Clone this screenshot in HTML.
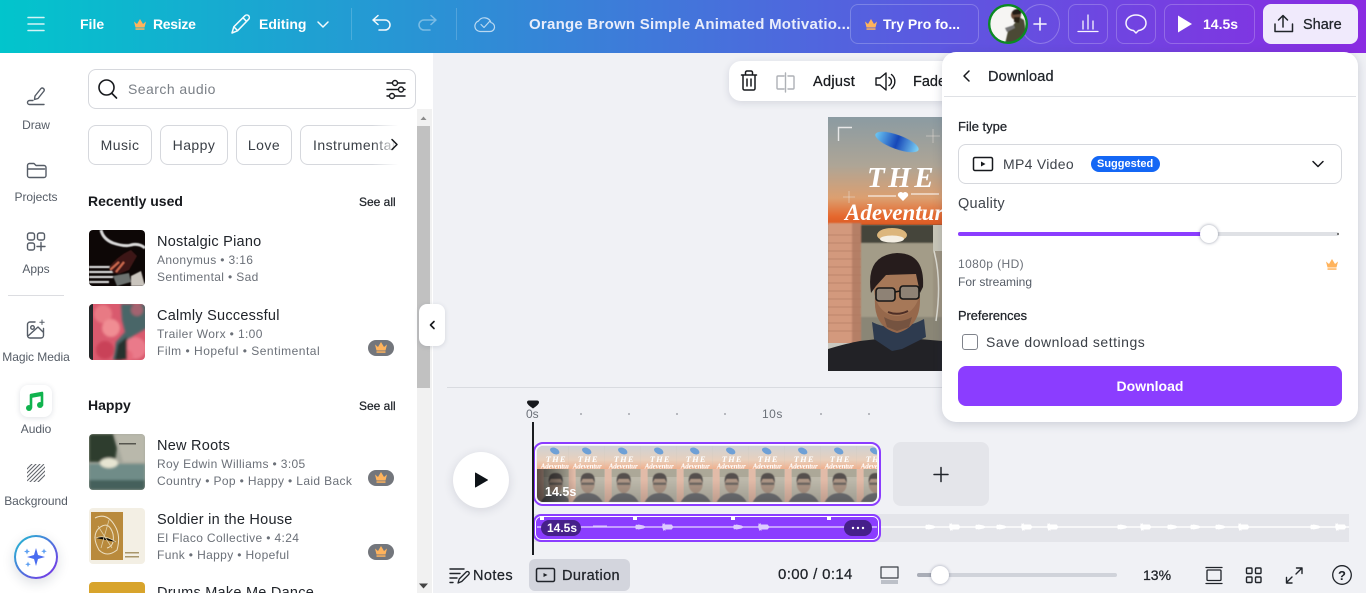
<!DOCTYPE html>
<html><head><meta charset="utf-8"><style>
*{box-sizing:border-box}html,body{margin:0;padding:0;width:1366px;height:593px;overflow:hidden}
body{background:#f0f1f5;font-family:"Liberation Sans",sans-serif;color:#0e1318}
#p{position:relative;width:1366px;height:593px;overflow:hidden;background:#f0f1f5}
.a{position:absolute}
.t{position:absolute;white-space:nowrap;line-height:18px;height:18px}
.m{-webkit-text-stroke:.25px currentColor}
.w{color:#fff}
.nav{font-size:12px;color:#555c66;width:72px;text-align:center;left:0;letter-spacing:-.05px}
.ti{font-size:14.5px;color:#20242a;left:157px;letter-spacing:.25px}
.su{font-size:12px;color:#6b7078;left:157px;letter-spacing:.36px}
.chip{position:absolute;top:125px;height:40px;border:1px solid #d6d8dd;border-radius:8px;background:#fff;font-size:14px;line-height:38px;text-align:center;color:#3a3f46;letter-spacing:.45px;white-space:nowrap}
.btn{position:absolute;top:4px;height:40px;border:1px solid rgba(255,255,255,.22);border-radius:8px}
.pill{position:absolute;left:368px;width:26px;height:16px;border-radius:8px;background:#73767c}
svg.i{position:absolute;left:0;top:0;overflow:visible}
</style></head><body><div id="p">
<div class="a" style="left:0;top:0;width:1366px;height:53px;background:linear-gradient(90deg,#02c5cc 0%,#2c90d5 33%,#5a5ae0 67%,#8a2be2 100%)"></div>
<div class="a" style="left:351px;top:8px;width:1px;height:32px;background:rgba(255,255,255,.18)"></div>
<div class="a" style="left:456px;top:8px;width:1px;height:32px;background:rgba(255,255,255,.18)"></div>
<div class="a" style="left:0;top:53px;width:433px;height:540px;background:#fff"></div>
<div class="a" style="left:417px;top:109px;width:15px;height:484px;background:#f1f1f1"></div>
<div class="a" style="left:417px;top:126px;width:13px;height:262px;background:#c1c1c1"></div>
<div class="a" style="left:447px;top:387px;width:500px;height:1px;background:#d9dbe0"></div>

<!-- header buttons -->
<div class="btn" style="left:850px;width:129px"></div>
<div class="a" style="left:1021px;top:4px;width:39px;height:40px;border:1px solid rgba(255,255,255,.25);border-radius:50%"></div>
<div class="btn" style="left:1068px;width:40px"></div>
<div class="btn" style="left:1116px;width:40px"></div>
<div class="btn" style="left:1164px;width:91px"></div>
<div class="a" style="left:1263px;top:4px;width:95px;height:40px;background:#f0eafc;border-radius:8px"></div>

<div class="t w" style="left:80px;top:15px;font-size:14px;font-weight:bold">File</div>
<div class="t w" style="left:153px;top:15px;font-size:14px;font-weight:bold;letter-spacing:-.3px">Resize</div>
<div class="t w" style="left:259px;top:15px;font-size:14px;font-weight:bold">Editing</div>
<div class="t" style="left:529px;top:16px;font-size:15px;font-weight:bold;color:#e9edfb;letter-spacing:.25px">Orange Brown Simple Animated Motivatio...</div>
<div class="t w" style="left:883px;top:15px;font-size:14px;font-weight:bold">Try Pro fo...</div>
<div class="t w" style="left:1203px;top:15px;font-size:14px;font-weight:bold">14.5s</div>
<div class="t m" style="left:1303px;top:16px;font-size:14.5px;color:#20242a">Share</div>

<!-- avatar -->
<svg class="a" style="left:988px;top:4px" width="40" height="40" viewBox="0 0 40 40">
<defs><clipPath id="av"><circle cx="20" cy="20" r="18"/></clipPath><filter id="ba"><feGaussianBlur stdDeviation=".5"/></filter></defs>
<g clip-path="url(#av)"><rect width="40" height="40" fill="#f6f5f3"/><g filter="url(#ba)">
<path d="M17 40l3-13 7-8 4-6 5 3 4 24z" fill="#4c4a36"/><circle cx="28" cy="11" r="5" fill="#6a4d3a"/><path d="M24 8q4-5 10-2l-1 4-8 1z" fill="#241c18"/><path d="M26 13l6 0-1 6-5-1z" fill="#2a2018"/><path d="M17 24l9-3 1 3-8 4z" fill="#777"/></g></g>
<circle cx="20" cy="20" r="18.8" fill="none" stroke="#0b8a22" stroke-width="2.4"/></svg>

<!-- search -->
<div class="a" style="left:88px;top:69px;width:328px;height:40px;border:1px solid #d6d8dd;border-radius:8px"></div>
<div class="t" style="left:128px;top:80px;font-size:14px;color:#7b8087;letter-spacing:.45px">Search audio</div>
<div class="chip" style="left:88px;width:64px">Music</div>
<div class="chip" style="left:160px;width:68px">Happy</div>
<div class="chip" style="left:236px;width:56px">Love</div>
<div class="chip" style="left:300px;width:110px;text-align:left;padding-left:12px;overflow:hidden">Instrumental</div>
<div class="a" style="left:372px;top:124px;width:44px;height:42px;background:linear-gradient(90deg,rgba(255,255,255,0),#fff 60%)"></div>

<!-- nav labels -->
<div class="t nav" style="top:116px">Draw</div>
<div class="t nav" style="top:188px">Projects</div>
<div class="t nav" style="top:260px">Apps</div>
<div class="a" style="left:8px;top:295px;width:56px;height:1px;background:#dcdde1"></div>
<div class="t nav" style="top:348px">Magic Media</div>
<div class="a" style="left:20px;top:385px;width:32px;height:32px;background:#fff;border-radius:8px;box-shadow:0 1px 6px rgba(30,40,70,.14)"></div>
<div class="t nav" style="top:420px">Audio</div>
<div class="t nav" style="top:492px">Background</div>
<div class="a" style="left:14px;top:535px;width:44px;height:44px;border-radius:50%;background:linear-gradient(135deg,#1fc0d0,#7d2ae8);box-shadow:0 4px 12px rgba(30,40,70,.15)"></div>
<div class="a" style="left:16px;top:537px;width:40px;height:40px;border-radius:50%;background:#fff"></div>

<!-- list -->
<div class="t" style="left:88px;top:192px;font-size:14px;font-weight:bold;color:#17191d">Recently used</div>
<div class="t m" style="left:359px;top:193px;font-size:12px;color:#20242a">See all</div>
<div class="t" style="left:88px;top:396px;font-size:14px;font-weight:bold;color:#17191d">Happy</div>
<div class="t m" style="left:359px;top:397px;font-size:12px;color:#20242a">See all</div>

<svg class="a" style="left:89px;top:230px" width="56" height="56" viewBox="0 0 56 56"><defs><clipPath id="r1"><rect width="56" height="56" rx="4"/></clipPath><filter id="b1"><feGaussianBlur stdDeviation=".6"/></filter></defs><g clip-path="url(#r1)"><rect width="56" height="56" fill="#0d0706"/><g filter="url(#b1)"><path d="M12 0q2 9 12 13 12 4 18 2 8-2 14 3" fill="none" stroke="#d9d9d9" stroke-width="3"/><path d="M0 36h24v2H0zM0 41h25v2H0zM0 46h24v2H0zM0 51h20v2H0z" fill="#e6e6e6"/><path d="M20 37q10-12 22-17l6 6-8 14-10 4-6-1z" fill="#3c1512"/><path d="M21 40l9-8M27 42l8-10" stroke="#d06a50" stroke-width="2"/><path d="M24 46l16-3 2 9-14 4z" fill="#6d7270"/><path d="M42 46l10-5 4 15H42z" fill="#c9c4bd"/></g></g></svg>
<svg class="a" style="left:89px;top:304px" width="56" height="56" viewBox="0 0 56 56"><defs><clipPath id="r2"><rect width="56" height="56" rx="4"/></clipPath><filter id="b2"><feGaussianBlur stdDeviation="1.4"/></filter></defs><g clip-path="url(#r2)"><rect width="56" height="56" fill="#d95a6e"/><g filter="url(#b2)"><path d="M32 0h26v24l-14 8-8 24H24l3-18 9-10-3-12z" fill="#4a6668"/><circle cx="14" cy="10" r="9" fill="#e87a84"/><circle cx="22" cy="24" r="9" fill="#f08d93"/><circle cx="46" cy="44" r="11" fill="#ea7a8a"/><circle cx="38" cy="52" r="6" fill="#e56a7c"/><circle cx="16" cy="46" r="9" fill="#c94259"/><circle cx="48" cy="6" r="6" fill="#a3636f"/><path d="M26 56l3-16 9-7 0 23z" fill="#26302f"/></g><rect width="4" height="56" fill="#24282a"/></g></svg>
<svg class="a" style="left:89px;top:434px" width="56" height="56" viewBox="0 0 56 56"><defs><clipPath id="r3"><rect width="56" height="56" rx="4"/></clipPath><filter id="b3"><feGaussianBlur stdDeviation="1.3"/></filter></defs><g clip-path="url(#r3)"><rect width="56" height="56" fill="#a5a79b"/><g filter="url(#b3)"><path d="M26 0H56V28H34z" fill="#b9b8ab"/><path d="M0 0h24l4 14-2 14H0z" fill="#2d3e2e"/><path d="M0 30h56v26H0z" fill="#6f8c88"/><path d="M0 46h56v10H0z" fill="#44605c"/><ellipse cx="20" cy="29" rx="9" ry="5" fill="#e6e5d2"/></g><rect x="30" y="9" width="17" height="1.500" fill="#55554e"/></g></svg>
<svg class="a" style="left:89px;top:508px" width="56" height="56" viewBox="0 0 56 56"><defs><clipPath id="r4"><rect width="56" height="56" rx="4"/></clipPath></defs><g clip-path="url(#r4)"><rect width="56" height="56" fill="#f3efe4"/><rect x="2" y="4" width="32" height="48" fill="#b98a3c"/><path d="M6 10q12-6 20 8 6 10 2 24-10 8-18 0-8-14 0-22 10-8 14 6 2 12-6 14" fill="none" stroke="#ecdfc2" stroke-width="1"/><path d="M9 18l14 22M20 12l-8 28M7 30q8-4 20 4" stroke="#e0cfa6" stroke-width=".8"/><rect x="36" y="44" width="14" height="1.500" fill="#a8966a"/><rect x="36" y="48" width="14" height="1.500" fill="#a8966a"/></g></svg>
<svg class="a" style="left:89px;top:582px" width="56" height="11"><path d="M4 0h48a4 4 0 0 1 4 4v7H0V4a4 4 0 0 1 4-4z" fill="#d8a42c"/></svg>

<div class="t ti" style="top:233px">Nostalgic Piano</div>
<div class="t su" style="top:251px">Anonymus • 3:16</div>
<div class="t su" style="top:268px">Sentimental • Sad</div>
<div class="t ti" style="top:307px">Calmly Successful</div>
<div class="t su" style="top:325px">Trailer Worx • 1:00</div>
<div class="t su" style="top:342px;letter-spacing:.5px">Film • Hopeful • Sentimental</div>
<div class="t ti" style="top:437px">New Roots</div>
<div class="t su" style="top:455px">Roy Edwin Williams • 3:05</div>
<div class="t su" style="top:472px">Country • Pop • Happy • Laid Back</div>
<div class="t ti" style="top:511px">Soldier in the House</div>
<div class="t su" style="top:529px">El Flaco Collective • 4:24</div>
<div class="t su" style="top:546px">Funk • Happy • Hopeful</div>
<div class="t ti" style="top:584px">Drums Make Me Dance</div>
<div class="pill" style="top:340px"></div><div class="pill" style="top:470px"></div><div class="pill" style="top:544px"></div>

<!-- toolbar -->
<div class="a" style="left:729px;top:61px;width:230px;height:40px;background:#fff;border-radius:12px;box-shadow:0 2px 8px rgba(50,60,90,.14)"></div>
<div class="t m" style="left:813px;top:73px;font-size:14.500px;color:#17191d;letter-spacing:.3px">Adjust</div>
<div class="t m" style="left:913px;top:73px;font-size:14.500px;color:#17191d">Fade</div>

<!-- canvas preview -->
<svg class="a" style="left:828px;top:117px" width="114" height="254" viewBox="0 0 114 254">
<defs><linearGradient id="sky" x1="0" y1="0" x2="0" y2="1"><stop offset="0" stop-color="#8b9ba2"/><stop offset=".45" stop-color="#aea596"/><stop offset=".75" stop-color="#dc9f70"/><stop offset=".92" stop-color="#e5682e"/><stop offset="1" stop-color="#dc5a24"/></linearGradient>
<linearGradient id="disc" x1="0" y1="0" x2="1" y2="0"><stop offset="0" stop-color="#6cc7f3"/><stop offset=".5" stop-color="#1747b8"/><stop offset="1" stop-color="#7fd5f7"/></linearGradient>
<filter id="bp"><feGaussianBlur stdDeviation=".9"/></filter><filter id="bq"><feGaussianBlur stdDeviation=".3"/></filter></defs>
<rect width="114" height="108" fill="url(#sky)"/>
<path d="M10.500 24V10.500H24" fill="none" stroke="#e8e8e8" stroke-width="1.400"/>
<ellipse cx="69" cy="25" rx="23" ry="7" transform="rotate(20 69 25)" fill="url(#disc)" filter="url(#bq)"/>
<path d="M105 12v14M98 19h14M21 74v12M15 80h12" stroke="#e9dfd8" stroke-width=".5"/>
<g filter="url(#bq)"><text x="39" y="70" font-family="Liberation Serif" font-style="italic" font-weight="bold" font-size="29" fill="#fff" letter-spacing="3.500">THE</text>
<path d="M75 84l-5-5a3 3 0 0 1 5-3 3 3 0 0 1 5 3z" fill="#fff"/><path d="M40 79h28M83 77h28" stroke="#fff" stroke-width="1"/>
<text x="17" y="103" font-family="Liberation Serif" font-style="italic" font-weight="bold" font-size="23" fill="#fff">Adeventure</text></g>
<rect y="108" width="114" height="146" fill="#9d9481"/>
<g filter="url(#bp)">
<path d="M33 108h81v18H33z" fill="#45453a"/>
<path d="M33 126h72v74H33z" fill="#a39c88"/>
<path d="M0 106h33v122H0z" fill="#d3997d"/>
<rect x="24" y="106" width="9" height="122" fill="#a8735c" opacity=".7"/>
<path d="M33 200h81v30H33z" fill="#8a8676"/>
</g>
<path d="M0 118h33M0 126h33M0 134h33M0 142h33M0 150h33M0 158h33M0 166h33M0 174h33M0 182h33M0 190h33M0 198h33M0 206h33M0 214h33" stroke="#b07a60" stroke-width=".8" opacity=".8"/>
<g filter="url(#bq)">
<path d="M49 116q15-10 30 0z" fill="#2a2a26"/><ellipse cx="64" cy="118" rx="15" ry="7" fill="#dcb67c"/><ellipse cx="64" cy="122" rx="12" ry="3.500" fill="#f4efe3"/>
<path d="M105 108h9v26h-9z" fill="#c8c6b8"/><path d="M106 134q8 30 2 70" fill="none" stroke="#dcdad0" stroke-width="1.500"/>
<path d="M0 226h114v28H0z" fill="#c9c8c0"/>
<path d="M0 232q20-6 32-8l36-4 46 4v30H0z" fill="#232326"/>
<path d="M44 205q24 12 52-3l2 18-24 12-10 2-18-12z" fill="#2d3a50"/>
<path d="M47 180q-2 30 22 36 24-6 23-36z" fill="#96684c"/>
<ellipse cx="69" cy="172" rx="23" ry="27" fill="#a67858"/>
<path d="M43 176q-6-38 26-40 28 0 26 34l-3 6-4-19-30 1-10 11z" fill="#261f1d"/>
<rect x="48" y="171" width="19" height="13" rx="3" fill="#8e8274" stroke="#151515" stroke-width="1.600"/>
<rect x="72" y="169" width="19" height="13" rx="3" fill="#8e8274" stroke="#151515" stroke-width="1.600"/>
<path d="M67 175l5-1" stroke="#151515" stroke-width="1.600"/>
<path d="M60 195q10 4 20-1" stroke="#4e2e26" stroke-width="2" fill="none"/>
<path d="M56 200q14 8 28 0l-3 10-12 4-10-4z" fill="#5f4638" opacity=".6"/>
</g>
</svg>

<!-- ruler -->
<div class="t" style="left:526px;top:405px;font-size:12px;color:#6b7078">0s</div>
<div class="t" style="left:762px;top:405px;font-size:12px;color:#6b7078;letter-spacing:.5px">10s</div>

<!-- play -->
<div class="a" style="left:453px;top:452px;width:56px;height:56px;border-radius:50%;background:#fff;box-shadow:0 2px 10px rgba(40,50,80,.14)"></div>

<!-- film strip -->
<svg class="a" style="left:533px;top:442px" width="348" height="64" viewBox="0 0 348 64">
<defs>
<linearGradient id="g1" x1="0" y1="0" x2="0" y2="1"><stop offset="0" stop-color="#cfd2d4"/><stop offset=".6" stop-color="#e8d0bd"/><stop offset="1" stop-color="#efb08e"/></linearGradient>
<linearGradient id="dk" x1="0" y1="0" x2="0" y2="1"><stop offset=".6" stop-color="#000" stop-opacity="0"/><stop offset="1" stop-color="#000" stop-opacity=".16"/></linearGradient>
<linearGradient id="dl" x1="0" y1="0" x2="1" y2="0"><stop offset="0" stop-color="#000" stop-opacity=".6"/><stop offset="1" stop-color="#000" stop-opacity="0"/></linearGradient>
<filter id="bf"><feGaussianBlur stdDeviation=".45"/></filter>
<clipPath id="fc"><rect x="4" y="4" width="340" height="56" rx="6"/></clipPath>
<g id="fr"><rect width="36" height="56" fill="#bdb9ab"/><rect width="36" height="23" fill="url(#g1)"/>
<rect y="23" width="7" height="33" fill="#e2bba8"/><rect x="7" y="23" width="29" height="8" fill="#aca898"/>
<g filter="url(#bf)"><path d="M4 56q5-9 15-9t15 9z" fill="#707174"/><ellipse cx="19" cy="38" rx="7" ry="9" fill="#ad9686"/><path d="M12 37q-1-10 7-10t7 10l-2-4H14z" fill="#55504e"/><rect x="12.500" y="36.500" width="13" height="2.500" fill="#555" opacity=".7"/></g>
<ellipse cx="18" cy="5" rx="5" ry="3" transform="rotate(25 18 5)" fill="#6ea0d6"/>
<text x="9" y="16" font-family="Liberation Serif" font-style="italic" font-weight="bold" font-size="8.500" fill="#fff" letter-spacing="1.200">THE</text>
<text x="4" y="22.500" font-family="Liberation Serif" font-style="italic" font-weight="bold" font-size="7" fill="#fff" textLength="29">Adeventur</text></g>
</defs>
<g clip-path="url(#fc)">
<use href="#fr" x="-32" y="4"/><use href="#fr" x="3.700" y="4"/><use href="#fr" x="35.700" y="4"/><use href="#fr" x="71.700" y="4"/><use href="#fr" x="107.700" y="4"/><use href="#fr" x="143.700" y="4"/><use href="#fr" x="179.700" y="4"/><use href="#fr" x="215.700" y="4"/><use href="#fr" x="251.700" y="4"/><use href="#fr" x="287.700" y="4"/><use href="#fr" x="323.700" y="4"/>
<rect x="4" y="4" width="340" height="56" fill="url(#dk)"/><rect x="4" y="27" width="38" height="33" fill="url(#dl)"/>
</g>
<rect x="2" y="2" width="344" height="60" rx="8" fill="none" stroke="#fff" stroke-width="2"/>
<rect x="1" y="1" width="346" height="62" rx="9" fill="none" stroke="#8b3dff" stroke-width="2"/>
</svg>
<div class="t w" style="left:545px;top:483px;font-size:12.5px;font-weight:bold">14.5s</div>
<div class="a" style="left:893px;top:442px;width:96px;height:64px;background:#e4e5ea;border-radius:8px"></div>

<!-- audio track -->
<div class="a" style="left:533px;top:514px;width:816px;height:28px;background:#e4e5ea"></div>
<svg class="a" style="left:533px;top:514px" width="816" height="28" viewBox="0 0 816 28">
<defs>
<path id="bp1" d="M0 13l1-2.500 1 .5 1.500-.5 5 1 2.500 1.500-2.500 1.500-5 1-1.500-.5-1 .5z"/>
<path id="bp2" d="M0 13l.8-4 .8 1 1-1 1 8-1-1-1 1z M2.600 10.500h7l2 2.500-2 2.500h-7z"/>
</defs>
<rect x="348" y="12.300" width="468" height="1.400" fill="#fff"/>
<g fill="#fff"><use href="#bp1" x="392"/><use href="#bp2" x="416"/><use href="#bp1" x="442"/><use href="#bp1" x="463"/><use href="#bp2" x="488"/><use href="#bp2" x="514"/><use href="#bp1" x="584"/><use href="#bp2" x="607"/><use href="#bp1" x="634"/><use href="#bp1" x="657"/><use href="#bp1" x="682"/><use href="#bp2" x="705"/><use href="#bp1" x="777"/><use href="#bp2" x="802"/></g>
<rect x="1" y="1" width="346" height="26" rx="7" fill="#8b3dff" stroke="#8b3dff" stroke-width="2"/>
<rect x="2.500" y="2.500" width="343" height="23" rx="6" fill="none" stroke="#fff" stroke-width="1"/>
<rect x="4" y="12.300" width="340" height="1.400" fill="#dcc9ff"/>
<g fill="#dcc9ff"><rect x="60" y="11.500" width="14" height="1.500"/><use href="#bp1" x="102"/><use href="#bp2" x="129"/><use href="#bp1" x="200"/><use href="#bp2" x="225"/></g>
<rect x="7" y="2" width="4" height="4" fill="#fff"/><rect x="100" y="2" width="4" height="4" fill="#fff"/><rect x="198" y="2" width="4" height="4" fill="#fff"/><rect x="294" y="2" width="4" height="4" fill="#fff"/>
<rect x="8" y="6" width="40" height="16" rx="8" fill="#46208a"/>
<rect x="311" y="6" width="28" height="16" rx="8" fill="#46208a"/>
<circle cx="320" cy="14" r="1.200" fill="#fff"/><circle cx="325" cy="14" r="1.200" fill="#fff"/><circle cx="330" cy="14" r="1.200" fill="#fff"/>
</svg>
<div class="t w" style="left:547px;top:519px;font-size:12px;font-weight:bold">14.5s</div>

<!-- bottom bar -->
<div class="a" style="left:529px;top:559px;width:101px;height:32px;background:#d3d5dd;border-radius:6px"></div>
<div class="t m" style="left:473px;top:567px;font-size:14.5px;color:#20242a;letter-spacing:.45px">Notes</div>
<div class="t m" style="left:562px;top:567px;font-size:14.5px;color:#20242a;letter-spacing:.4px">Duration</div>
<div class="t m" style="left:778px;top:566px;font-size:15px;color:#20242a;letter-spacing:.35px">0:00 / 0:14</div>
<div class="t m" style="left:1143px;top:566px;font-size:14px;color:#20242a">13%</div>
<div class="a" style="left:917px;top:573px;width:200px;height:4px;border-radius:2px;background:#d0d3da"></div>
<div class="a" style="left:917px;top:573px;width:22px;height:4px;border-radius:2px;background:#a9adb7"></div>
<div class="a" style="left:931px;top:566px;width:18px;height:18px;border-radius:50%;background:#fff;box-shadow:0 0 3px rgba(40,50,80,.4)"></div>

<!-- playhead -->
<div class="a" style="left:532px;top:422px;width:2px;height:133px;background:#1a1c20"></div>

<!-- download panel -->
<div class="a" style="left:942px;top:52px;width:416px;height:370px;background:#fff;border-radius:14px;box-shadow:0 2px 10px rgba(50,60,90,.2)"></div>
<div class="a" style="left:944px;top:96px;width:412px;height:1px;background:#dfe1e5"></div>
<div class="t m" style="left:988px;top:68px;font-size:14.5px;color:#20242a;letter-spacing:.15px">Download</div>
<div class="t m" style="left:958px;top:118px;font-size:13px;color:#20242a">File type</div>
<div class="a" style="left:958px;top:144px;width:384px;height:40px;border:1px solid #d6d8dd;border-radius:8px"></div>
<div class="t" style="left:1003px;top:155px;font-size:14px;color:#3f444b;letter-spacing:.3px">MP4 Video</div>
<div class="a" style="left:1091px;top:156px;width:69px;height:16px;border-radius:8px;background:#1467f5"></div>
<div class="t w" style="left:1097px;top:155px;font-size:11px;font-weight:bold">Suggested</div>
<div class="t" style="left:958px;top:195px;font-size:14.5px;color:#3f444b;letter-spacing:.25px">Quality</div>
<div class="a" style="left:958px;top:232px;width:381px;height:4px;border-radius:2px;background:#dfe1e5"></div>
<div class="a" style="left:958px;top:232px;width:251px;height:4px;border-radius:2px;background:#8b3dff"></div>
<div class="a" style="left:1200px;top:225px;width:18px;height:18px;border-radius:50%;background:#fff;box-shadow:0 0 3px rgba(40,50,80,.5)"></div>
<div class="a" style="left:1337px;top:233px;width:2px;height:2px;background:#777"></div>
<div class="t" style="left:958px;top:255px;font-size:12px;color:#6b7078;letter-spacing:.4px">1080p (HD)</div>
<div class="t" style="left:958px;top:273px;font-size:12px;color:#555c66">For streaming</div>
<div class="t m" style="left:958px;top:307px;font-size:12.8px;color:#20242a">Preferences</div>
<div class="a" style="left:962px;top:334px;width:16px;height:16px;border:1px solid #7f838b;border-radius:3px;background:#fff"></div>
<div class="t" style="left:986px;top:333px;font-size:14px;color:#3a3f46;letter-spacing:.52px">Save download settings</div>
<div class="a" style="left:958px;top:366px;width:384px;height:40px;border-radius:8px;background:#8b3dff"></div>
<div class="t w" style="left:958px;width:384px;text-align:center;top:377px;font-size:14px;font-weight:bold">Download</div>

<!-- icons overlay -->
<svg class="i" width="1366" height="593" viewBox="0 0 1366 593" fill="none" stroke-linecap="round" stroke-linejoin="round">
<defs><g id="crown"><path d="M0 2.500l3 2.500L6 0l3 5 3-2.500L10.500 8.500h-9z"/><rect x="1.500" y="9.300" width="9" height="1.500"/></g></defs>
<g stroke="#fff" stroke-width="1.500" opacity=".95">
<path d="M28 17.500h16M28 24h16M28 30.500h16" stroke="#dff7f8"/>
<path d="M232 33l1.800-6.200L245 15.700a2.500 2.500 0 0 1 3.600 3.600L237.500 30.800zM243 17.800l3.400 3.400M234 27l3.500 3.500"/>
<path d="M318 22l5 5 5-5"/>
<path d="M373 20h12a5 5 0 0 1 0 10h-6M378 15.500L373 20l5 4.500"/>
<path d="M436 20h-12a5 5 0 0 0 0 10h6M431 15.500L436 20l-5 4.500" opacity=".4"/>
<path d="M480 31.500h10a4.500 4.500 0 0 0 1-8.900A7 7 0 0 0 478.500 21a5.400 5.400 0 0 0 1.500 10.500z M481 24.500l3 3 5.500-6" opacity=".7" stroke-width="1.200"/>
<path d="M1040 18v12M1034 24h12" stroke-width="1.600"/>
<path d="M1078 31.500h20M1083 29v-8M1088 29V15M1093 29v-8" stroke-width="1.300"/>
<path d="M1133.500 30.500C1129 30 1126 27 1126 23c0-4.600 4.500-8 10-8s10 3.400 10 8c0 4-3 7-7.500 7.500L1136 33z"/>
</g>
<path d="M1178 15.500l14 8.500-14 8.500z" fill="#fff"/>
<g fill="#ffb35c"><use href="#crown" x="134" y="19"/><use href="#crown" x="865" y="19"/><use href="#crown" x="1326" y="259"/></g>
<g fill="#ffb35c"><use href="#crown" x="375" y="342"/><use href="#crown" x="375" y="472"/><use href="#crown" x="375" y="546"/></g>
<path d="M1283 27V15.500M1278.500 20l4.500-4.500 4.500 4.500M1275 24v7.500h17.500V24" stroke="#20242a" stroke-width="1.500"/>
<!-- search + filters -->
<circle cx="106.500" cy="87.500" r="7.500" stroke="#17191d" stroke-width="1.600"/><path d="M112 93.500l4.500 4.500" stroke="#17191d" stroke-width="1.600"/>
<path d="M387 83h5M398 83h7M387 89.500h11M404 89.500h1M387 96h2M395 96h10" stroke="#17191d" stroke-width="1.400"/>
<circle cx="395" cy="83" r="2.500" stroke="#17191d" stroke-width="1.400"/><circle cx="401" cy="89.500" r="2.500" stroke="#17191d" stroke-width="1.400"/><circle cx="392" cy="96" r="2.500" stroke="#17191d" stroke-width="1.400"/>
<path d="M392 139.500l5 5-5 5" stroke="#17191d" stroke-width="1.500"/>
<path d="M420.500 120l3-3.500 3 3.500z" fill="#8a8a8a" stroke="none"/>
<path d="M419 583.500h9l-4.500 5z" fill="#444" stroke="none"/>
<!-- nav -->
<g stroke="#555c66" stroke-width="1.400">
<path d="M35 96l6-7.500a2 2 0 0 1 3 2.500l-6 7.500-3.500 1zM33 100.500h-3.500a2 2 0 0 0 0 4H44"/>
<path d="M27.500 165.500a2 2 0 0 1 2-2h4.500l2 2h8a2 2 0 0 1 2 2v8a2 2 0 0 1-2 2H29.500a2 2 0 0 1-2-2zM27.500 169h17"/>
<rect x="27.500" y="233" width="7" height="7" rx="2"/><rect x="37.500" y="233" width="7" height="7" rx="2"/><rect x="27.500" y="243" width="7" height="7" rx="2"/><path d="M41 242.500v8M37 246.500h8"/>
<path d="M35 322h-5a2.500 2.500 0 0 0-2.500 2.500v11a2.500 2.500 0 0 0 2.500 2.500h11a2.500 2.500 0 0 0 2.500-2.500v-7M28 336l10-9 5 5"/><circle cx="32.500" cy="327.500" r="1.800"/>
<path d="M42 320v4.500M39.800 322.200h4.400" stroke-width="1"/>
</g>
<path d="M31 407.500V395l11-2v12" stroke="#10b34e" stroke-width="2.600"/><circle cx="29" cy="408" r="3" fill="#10b34e"/><circle cx="40" cy="405" r="3" fill="#10b34e"/><path d="M31 394l11-2v4l-11 2z" fill="#10b34e" stroke="none"/>
<clipPath id="bgc"><rect x="27" y="464" width="18" height="18" rx="2"/></clipPath>
<g clip-path="url(#bgc)" stroke="#62666d" stroke-width="1.100"><path d="M22 474l14-14M22 478l18-18M22 482l22-22M25 483l22-22M29 483l18-18M33 483l14-14M37 483l10-10"/></g>
<path d="M36 548l2 7 7 2-7 2-2 7-2-7-7-2 7-2z" fill="#4a6cf0" stroke="none"/>
<path d="M27 548.500l.9 2.100 2.100.9-2.100.9-.9 2.100-.9-2.100-2.100-.9 2.100-.9zM44 548.500l.8 2 2 .8-2 .8-.8 2-.8-2-2-.8 2-.8zM28 561.500l.8 2 2 .8-2 .8-.8 2-.8-2-2-.8 2-.8z" fill="#5ea0f2" stroke="none"/>
</svg>

<div class="a" style="left:419px;top:304px;width:26px;height:42px;background:#fff;border-radius:8px;box-shadow:0 1px 5px rgba(50,60,90,.15)"></div>

<svg class="i" width="1366" height="593" viewBox="0 0 1366 593" fill="none" stroke-linecap="round" stroke-linejoin="round">
<path d="M434 321.500l-3.500 3.500 3.500 3.500" stroke="#17191d" stroke-width="1.600"/>
<!-- toolbar -->
<path d="M741.500 75h15M745.500 75v-2.500a1.500 1.500 0 0 1 1.500-1.500h4a1.500 1.500 0 0 1 1.500 1.500V75M743 75v13.500a1.500 1.500 0 0 0 1.500 1.500h9a1.500 1.500 0 0 0 1.500-1.500V75M747 79v7M751 79v7" stroke="#17191d" stroke-width="1.500"/>
<path d="M784 76h-6a1 1 0 0 0-1 1v11a1 1 0 0 0 1 1h6M788 76h5a1 1 0 0 1 1 1v11a1 1 0 0 1-1 1h-5M785.500 73v19" stroke="#aeb1b6" stroke-width="1.400"/>
<path d="M876 78v7h4l6 5V73l-6 5zM889 77.500a4.500 4.500 0 0 1 0 8M891.500 74.500a9 9 0 0 1 0 14" stroke="#17191d" stroke-width="1.400"/>
<!-- panel -->
<path d="M969 71l-5 5 5 5" stroke="#17191d" stroke-width="1.500"/>
<rect x="973.500" y="157.500" width="19" height="13" rx="1.500" stroke="#17191d" stroke-width="1.500"/>
<path d="M981 161.500l4.500 2.500-4.500 2.500z" fill="#17191d" stroke="none"/>
<path d="M1313 161.500l5 5 5-5" stroke="#17191d" stroke-width="1.500"/>
<!-- ruler -->
<path d="M527 402.500q0-2 2-2h8q2 0 2 2 0 2-6 6-6-4-6-6z" fill="#17191d" stroke="none"/>
<g fill="#b7b9bf" stroke="none"><rect x="580" y="413" width="2" height="2"/><rect x="628" y="413" width="2" height="2"/><rect x="676" y="413" width="2" height="2"/><rect x="724" y="413" width="2" height="2"/><rect x="820" y="413" width="2" height="2"/><rect x="868" y="413" width="2" height="2"/></g>
<path d="M475.500 473l12 7-12 7z" fill="#0e1318" stroke="#0e1318"/>
<path d="M941 467.500v14M934 474.500h14" stroke="#20242a" stroke-width="1.500"/>
<!-- bottom -->
<path d="M450 569h14M450 573.500h10M450 578h7M450 582.500h3" stroke="#20242a" stroke-width="1.400"/>
<path d="M458 583l1.200-4 7-7a1.700 1.700 0 0 1 2.500 2.500l-7 7z" stroke="#20242a" stroke-width="1.300"/>
<rect x="536.500" y="568.500" width="18" height="13" rx="1.500" stroke="#20242a" stroke-width="1.500"/>
<path d="M543.500 573l4 2-4 2z" fill="#20242a" stroke="none"/>
<rect x="881" y="567" width="17" height="11" stroke="#3a3f46" stroke-width="1.200"/>
<path d="M881 580h17v4h-17z" fill="#bcc0c8" stroke="none"/>
<path d="M1206 567.500h16M1206 583.500h16" stroke="#20242a" stroke-width="1.300"/><rect x="1207" y="570" width="14" height="10.500" rx="1" stroke="#20242a" stroke-width="1.300"/>
<rect x="1246.500" y="568" width="5.500" height="5.500" rx="1" stroke="#20242a" stroke-width="1.400"/><rect x="1255.500" y="568" width="5.500" height="5.500" rx="1" stroke="#20242a" stroke-width="1.400"/><rect x="1246.500" y="577" width="5.500" height="5.500" rx="1" stroke="#20242a" stroke-width="1.400"/><rect x="1255.500" y="577" width="5.500" height="5.500" rx="1" stroke="#20242a" stroke-width="1.400"/>
<path d="M1296 574l5.500-5.500M1296.500 568h5.500v5.500M1292 577l-5.500 5.500M1286.500 577.500v5.500h5.500" stroke="#20242a" stroke-width="1.400"/>
<circle cx="1342" cy="575" r="9.300" stroke="#20242a" stroke-width="1.300"/>
<text x="1342" y="580" font-family="Liberation Sans" font-size="13" font-weight="bold" fill="#20242a" stroke="none" text-anchor="middle">?</text>
</svg>
</div></body></html>
